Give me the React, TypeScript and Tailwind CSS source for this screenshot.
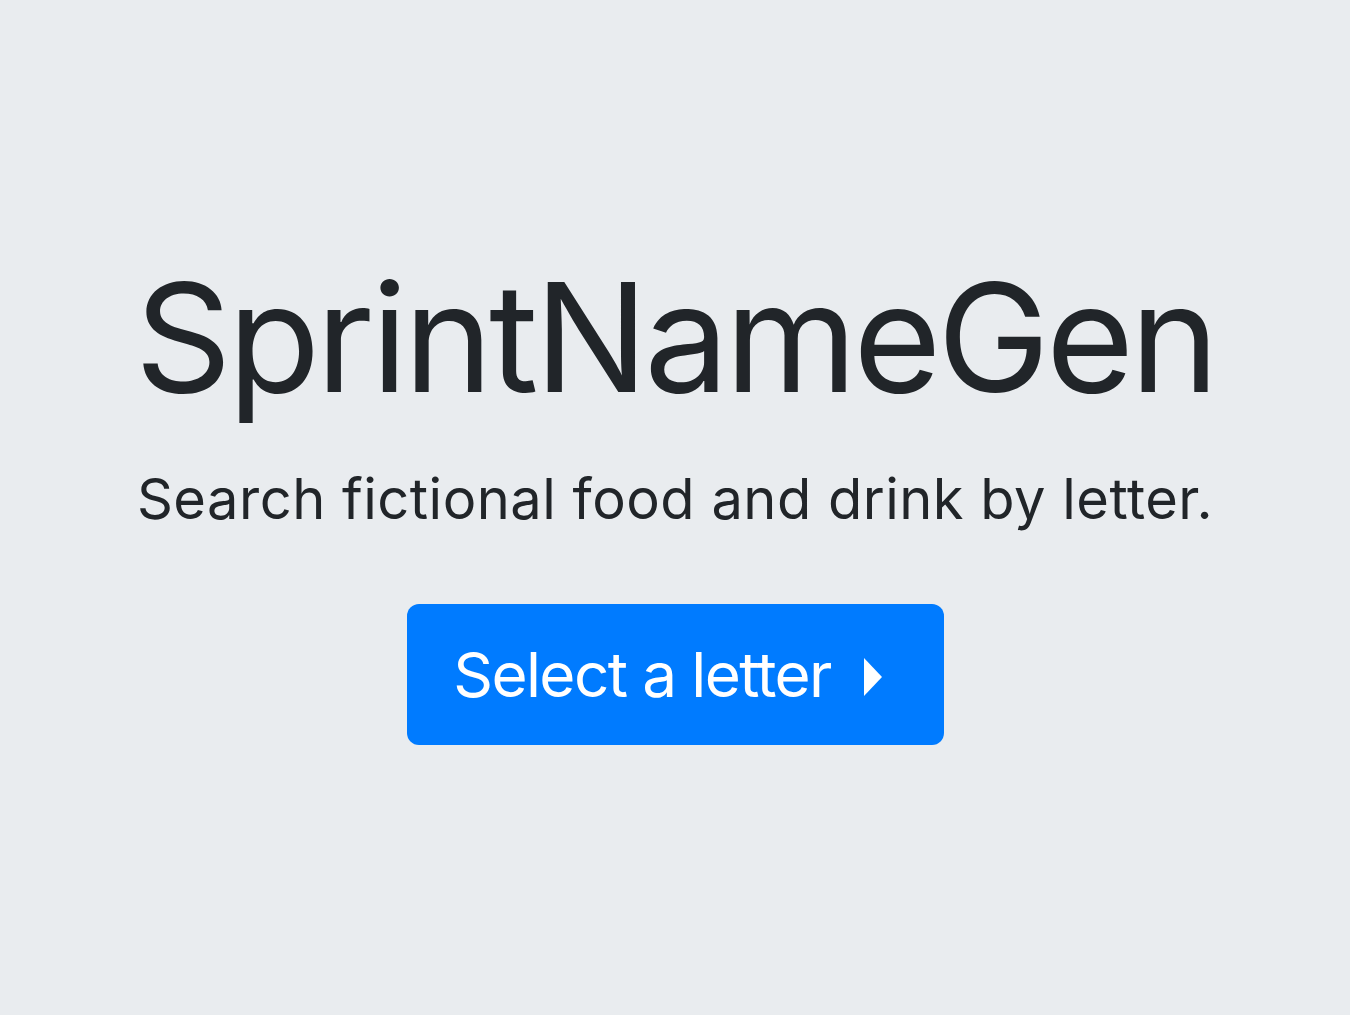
import React from "react";

export default function App() {
  return (
    <div
      className="min-h-screen bg-[#e9ecef] text-[#212529] flex flex-col items-center"
      style={{ fontFamily: "Inter, 'Liberation Sans', sans-serif" }}
    >
      <h1 className="mt-[262px] text-[151px] leading-[150px] font-normal tracking-[-4px] whitespace-nowrap">
        SprintNameGen
      </h1>
      <p className="mt-[57px] text-[56px] leading-[60px] font-normal tracking-[0.5px] whitespace-nowrap">
        Search fictional food and drink by letter.
      </p>
      <button className="mt-[75px] w-[537px] h-[141px] bg-[#007bff] text-white rounded-[12px] flex items-center justify-center gap-[32px] pr-[14px] text-[62px] font-normal tracking-[-1.6px]">
        <span>Select a letter</span>
        <svg width="20" height="38" viewBox="0 0 20 38" className="mt-[4px]">
          <path d="M1 0 L19 19 L1 38 Z" fill="white" />
        </svg>
      </button>
    </div>
  );
}
